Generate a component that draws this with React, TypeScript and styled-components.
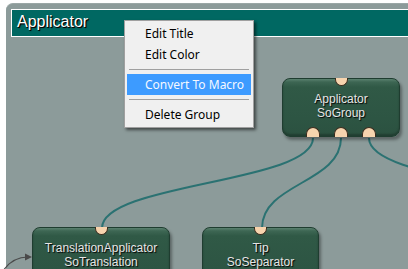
import React from "react";
import styled, { createGlobalStyle } from "styled-components";

const Global = createGlobalStyle`
  html, body { margin: 0; padding: 0; background: #ffffff; overflow: hidden; }
  #root { width: 408px; height: 269px; }
`;

const Page = styled.div`
  width: 408px;
  height: 269px;
  box-sizing: border-box;
  padding: 3px 0 0 6px;
  display: flex;
  overflow: hidden;
`;

const Panel = styled.div`
  position: relative;
  flex: 1;
  display: flex;
  flex-direction: column;
  padding: 5px 0 0 5px;
  background: #8c9b9a;
  border-top-left-radius: 7px;
  border-top: 1px solid #9aa7a6;
  box-sizing: border-box;
`;

const TitleBar = styled.div`
  height: 28px;
  box-sizing: border-box;
  border: 1px solid #ffffff;
  border-right: none;
  background: #006862;
  color: #ffffff;
  font-family: "Liberation Sans", Arial, sans-serif;
  font-size: 16px;
  line-height: 24px;
  padding-left: 5px;
  text-shadow: 1px 1px 1px #000000, 1px 1px 0 #1a1a1a;
`;

const Wires = styled.svg`
  position: absolute;
  left: 0;
  top: 0;
  overflow: visible;
  pointer-events: none;
`;

const Node = styled.div<{ $x: number; $y: number; $w: number }>`
  position: absolute;
  left: ${(p) => p.$x}px;
  top: ${(p) => p.$y}px;
  width: ${(p) => p.$w}px;
  height: 59px;
  box-sizing: border-box;
  border: 1px solid #1f3d30;
  border-radius: 8px;
  background: linear-gradient(
    to bottom,
    #5a816f 0px,
    #3d6653 3px,
    #305946 8px,
    #2d5543 70%,
    #2b5140 100%
  );
  box-shadow: 2px 3px 3px rgba(0, 0, 0, 0.35), inset 0 -2px 2px rgba(0, 0, 0, 0.25);
  padding-top: 13px;
  font-family: "Liberation Sans", Arial, sans-serif;
  font-size: 12px;
  line-height: 14px;
  color: #e6e6e6;
  text-align: center;
  text-shadow: 1px 1px 1px #000000;
`;

const PortRow = styled.div<{ $pos: "top" | "bottom" }>`
  position: absolute;
  left: 0;
  right: 0;
  ${(p) => (p.$pos === "top" ? "top: -1px;" : "bottom: -1px;")}
  display: flex;
  justify-content: center;
  align-items: ${(p) => (p.$pos === "top" ? "flex-start" : "flex-end")};
  gap: 14px;
`;

const Port = styled.div<{ $pos: "top" | "bottom" }>`
  width: ${(p) => (p.$pos === "top" ? 13 : 14)}px;
  height: ${(p) => (p.$pos === "top" ? 8 : 10)}px;
  box-sizing: border-box;
  background: #f7d4ae;
  border: 1px solid #3b2c1e;
  ${(p) =>
    p.$pos === "top"
      ? "border-top: none; border-radius: 0 0 7px 7px;"
      : "border-bottom: none; border-radius: 7px 7px 0 0;"}
`;

const Menu = styled.div`
  position: absolute;
  left: 118px;
  top: 16px;
  width: 130px;
  box-sizing: border-box;
  padding: 2px 2px;
  background: #f0f0f0;
  border: 1px solid #a0a0a0;
  box-shadow: 2px 2px 3px rgba(0, 0, 0, 0.55);
  font-family: "Noto Sans", "Segoe UI", sans-serif;
  font-size: 12px;
  color: #000000;
  display: flex;
  flex-direction: column;
`;

const Item = styled.div<{ $active?: boolean }>`
  height: 21px;
  line-height: 21px;
  padding-left: 18px;
  background: ${(p) => (p.$active ? "#3d9bff" : "transparent")};
  color: ${(p) => (p.$active ? "#f4f8ff" : "#000000")};
  white-space: nowrap;
`;

const Separator = styled.div`
  height: 1px;
  margin: 4px 2px 4px 2px;
  background: #a0a0a0;
`;

const wire = "#2b7272";

export default function App() {
  return (
    <>
      <Global />
      <Page>
        <Panel>
          <TitleBar>Applicator</TitleBar>
          <Wires width="402" height="266">
            <path d="M307 134 C307 179 96 179 96 224" fill="none" stroke={wire} strokeWidth="2" />
            <path d="M335 134 C335 179 256 179 256 224" fill="none" stroke={wire} strokeWidth="2" />
            <path d="M363 134 C363 179 580 179 580 224" fill="none" stroke={wire} strokeWidth="2" />
            <path d="M-3 267 C3 258 12 253 22 253" fill="none" stroke="#4a4a4a" strokeWidth="1.2" />
            <path d="M19 249.5 L26 253 L19 256.5 Z" fill="#4a4a4a" />
          </Wires>
          <Node $x={276} $y={74} $w={118}>
            <PortRow $pos="top">
              <Port $pos="top" />
            </PortRow>
            Applicator
            <br />
            SoGroup
            <PortRow $pos="bottom">
              <Port $pos="bottom" />
              <Port $pos="bottom" />
              <Port $pos="bottom" />
            </PortRow>
          </Node>
          <Node $x={26} $y={223} $w={138}>
            <PortRow $pos="top">
              <Port $pos="top" />
            </PortRow>
            TranslationApplicator
            <br />
            SoTranslation
          </Node>
          <Node $x={196} $y={223} $w={117}>
            <PortRow $pos="top">
              <Port $pos="top" />
            </PortRow>
            Tip
            <br />
            SoSeparator
          </Node>
          <Menu>
            <Item>Edit Title</Item>
            <Item>Edit Color</Item>
            <Separator />
            <Item $active>Convert To Macro</Item>
            <Separator />
            <Item>Delete Group</Item>
          </Menu>
        </Panel>
      </Page>
    </>
  );
}
